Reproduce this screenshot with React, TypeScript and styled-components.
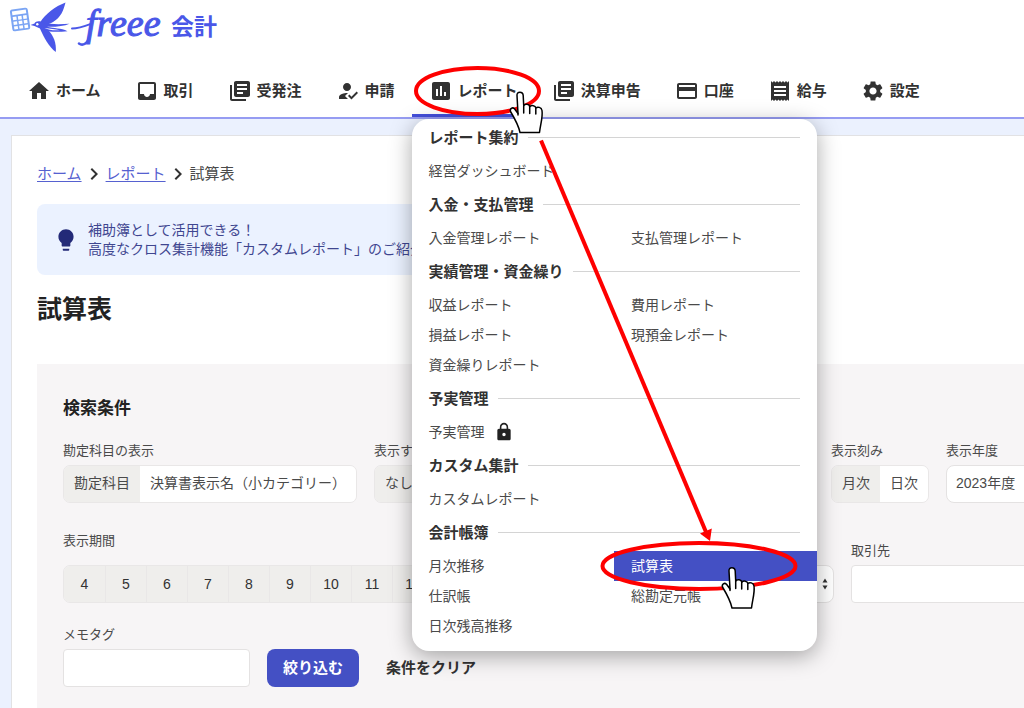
import React from "react";
import styled, { createGlobalStyle, css } from "styled-components";
import {
  MdAssessment,
  MdChevronRight,
  MdHome,
  MdHowToReg,
  MdInbox,
  MdLibraryBooks,
  MdLightbulb,
  MdLock,
  MdPayment,
  MdReceipt,
  MdSettings,
} from "react-icons/md";

const GlobalStyle = createGlobalStyle`
  *, *::before, *::after { box-sizing: border-box; }
  body {
    margin: 0;
    background: #ebf1fe;
    color: #323232;
    font-family: "Liberation Sans", "Noto Sans CJK JP", sans-serif;
    font-size: 14px;
    overflow-x: hidden;
  }
  button, input, select { font: inherit; color: inherit; }
`;

const Page = styled.div`
  display: flex;
  flex-direction: column;
  min-height: 100vh;
`;

const Header = styled.header`
  background: #fff;
  border-bottom: 2px solid #969cf2;
`;

const LogoLink = styled.a`
  display: flex;
  height: 64px;
  text-decoration: none;
`;

const LogoDrawing = styled.svg`
  width: 230px;
  height: 60px;
`;

const NavList = styled.ul`
  display: flex;
  height: 53px;
  margin: 0;
  padding: 0 10px;
  list-style: none;
`;

const NavItem = styled.li<{ $active?: boolean }>`
  position: relative;
  display: flex;
  border-bottom: 3px solid ${(p) => (p.$active ? "#444fdb" : "transparent")};
`;

const NavLink = styled.a`
  display: flex;
  align-items: center;
  gap: 5px;
  padding: 3px 17px 0;
  color: #323232;
  font-size: 15px;
  line-height: 20px;
  font-weight: 700;
  text-decoration: none;
  white-space: nowrap;

  svg { width: 24px; height: 24px; }
`;

const Menu = styled.div`
  position: absolute;
  z-index: 2;
  top: 55px;
  left: 0;
  width: 405px;
  padding-bottom: 10px;
  border-radius: 17px;
  background: #fff;
  box-shadow: 0 5px 22px rgba(0, 0, 0, 0.34);
`;

const MenuHeading = styled.h2`
  display: flex;
  align-items: center;
  gap: 9px;
  height: 37px;
  margin: 0;
  padding: 0 17px;
  font-size: 15px;
  line-height: 20px;
  white-space: nowrap;

  &::after {
    content: "";
    flex: 1;
    border-top: 1px solid #d4d4d4;
  }
`;

const MenuGrid = styled.div`
  display: grid;
  grid-template-columns: 1fr 1fr;
`;

const MenuLink = styled.a<{ $selected?: boolean }>`
  display: flex;
  align-items: center;
  gap: 9px;
  height: 30px;
  padding: 0 17px;
  font-size: 14px;
  line-height: 20px;
  color: ${(p) => (p.$selected ? "#fff" : "#4a4a4a")};
  background: ${(p) => (p.$selected ? "#4450c4" : "transparent")};
  text-decoration: none;
  white-space: nowrap;

  svg { width: 20px; height: 20px; color: #222; }
`;

const Annotation = styled.svg`
  position: absolute;
  z-index: 3;
  top: 0;
  left: -12px;
  width: 430px;
  height: 560px;
  pointer-events: none;
`;

const Main = styled.main`
  display: flex;
  flex: 1;
  flex-direction: column;
  margin: 16px 0 0 11px;
  padding: 28px 0 0 25px;
  border: 1px solid #e2e2e4;
  border-width: 1px 0 0 1px;
  background: #fff;
  overflow: hidden;
`;

const Breadcrumb = styled.nav`
  display: flex;
  align-items: center;
  height: 20px;
  font-size: 15px;
  line-height: 20px;
  color: #4a4a4a;

  svg { width: 24px; height: 24px; color: #323232; }
`;

const CrumbLink = styled.a`
  color: #5661d0;
  text-underline-offset: 2px;
`;

const Notice = styled.aside`
  display: flex;
  align-items: center;
  align-self: flex-start;
  gap: 9px;
  width: 480px;
  height: 71px;
  margin-top: 20px;
  padding: 0 16px;
  border-radius: 8px;
  background: #ebf2ff;
  color: #3f4690;
  font-size: 14px;
  line-height: 19px;
  white-space: nowrap;

  svg { width: 26px; height: 26px; color: #232a78; }
  p { margin: 0; }
`;

const Title = styled.h1`
  margin: 16px 0 37px;
  font-size: 25px;
  line-height: 36px;
  color: #222;
`;

const Filters = styled.form`
  flex: 1;
  padding: 32px 0 21px 26px;
  background: #f7f5f6;
`;

const FilterTitle = styled.h2`
  margin: 0 0 19px;
  font-size: 17px;
  line-height: 26px;
  color: #222;
`;

const FieldRow = styled.div<{ $space?: number }>`
  display: flex;
  align-items: flex-end;
  gap: 17px;
  margin-top: ${(p) => p.$space ?? 0}px;
`;

const Field = styled.div<{ $width?: number; $labelGap?: number }>`
  display: flex;
  flex: none;
  flex-direction: column;
  gap: ${(p) => p.$labelGap ?? 4}px;
  width: ${(p) => (p.$width ? `${p.$width}px` : "auto")};
`;

const labelText = css`
  font-size: 13px;
  line-height: 20px;
  color: #4a4a4a;
  white-space: nowrap;
`;

const FieldLabel = styled.label`${labelText}`;
const GroupLabel = styled.span`${labelText}`;

const Controls = styled.div<{ $gap?: number }>`
  display: flex;
  gap: ${(p) => p.$gap ?? 17}px;
`;

const Segments = styled.div`
  display: flex;
  align-self: flex-start;
  height: 38px;
  border: 1px solid #e9e7e7;
  border-radius: 7px;
  overflow: hidden;
`;

const Segment = styled.button<{ $on?: boolean }>`
  padding: 0 10px 2px;
  border: 0;
  background: ${(p) => (p.$on ? "#efeeec" : "#fff")};
  color: #4a4a4a;
  font-size: 14px;
  line-height: 20px;
  white-space: nowrap;
`;

const Month = styled(Segment)`
  width: 41px;
  padding: 0;
  color: #323232;

  & + & { border-left: 1px solid #e9e7e7; }
`;

const control = css`
  height: 38px;
  border: 1px solid #e4e2e2;
  background: #fff;
  font-size: 14px;
`;

const TextInput = styled.input<{ $width: number }>`
  ${control}
  width: ${(p) => p.$width}px;
  padding: 0 8px;
  border-radius: 4px;
`;

const Select = styled.select<{ $width: number }>`
  ${control}
  width: ${(p) => p.$width}px;
  padding: 0 9px 2px;
  border-radius: 8px;
  color: #4a4a4a;
  appearance: none;
`;

const SelectBox = styled.span`
  position: relative;
  display: flex;

  svg {
    position: absolute;
    top: 13px;
    right: 6px;
    width: 6px;
    height: 12px;
    pointer-events: none;
  }
`;

const SubmitButton = styled.button`
  height: 38px;
  padding: 0 16px 3px;
  border: 0;
  border-radius: 8px;
  background: #4450c4;
  color: #fff;
  font-size: 15px;
  font-weight: 700;
`;

const ClearButton = styled.button`
  height: 38px;
  padding: 0 9px 3px;
  border: 0;
  background: none;
  font-size: 15px;
  font-weight: 700;
`;

type NavEntry = { label: string; icon: React.ReactNode; active?: boolean };
const navEntries: NavEntry[] = [
  { label: "ホーム", icon: <MdHome /> },
  { label: "取引", icon: <MdInbox /> },
  { label: "受発注", icon: <MdLibraryBooks /> },
  { label: "申請", icon: <MdHowToReg /> },
  { label: "レポート", icon: <MdAssessment />, active: true },
  { label: "決算申告", icon: <MdLibraryBooks /> },
  { label: "口座", icon: <MdPayment /> },
  { label: "給与", icon: <MdReceipt /> },
  { label: "設定", icon: <MdSettings /> },
];

const menuSections = [
  { title: "レポート集約", items: ["経営ダッシュボード"] },
  { title: "入金・支払管理", items: ["入金管理レポート", "支払管理レポート"] },
  {
    title: "実績管理・資金繰り",
    items: ["収益レポート", "費用レポート", "損益レポート", "現預金レポート", "資金繰りレポート"],
  },
  { title: "予実管理", items: ["予実管理"], locked: true },
  { title: "カスタム集計", items: ["カスタムレポート"] },
  { title: "会計帳簿", items: ["月次推移", "試算表", "仕訳帳", "総勘定元帳", "日次残高推移"] },
];

const months = [4, 5, 6, 7, 8, 9, 10, 11, 12, 1, 2, 3];

function Logo() {
  return (
    <LogoLink href="#">
      <LogoDrawing viewBox="0 0 230 60" role="img" aria-label="freee 会計">
        <g transform="rotate(-8 20 19)">
          <rect x="11" y="8.500" width="18" height="22" rx="2.500" fill="#7ba5f4" />
          <path
            fill="#fff"
            d="M13 10.500h14v3.800H13zM13 16h3.700v3.400H13zM18.200 16h3.700v3.400H18.200zM23.400 16H27v3.400H23.400zM13 20.800h3.700v3.300H13zM18.200 20.800h3.700v3.300H18.200zM23.400 20.800H27v3.300H23.400zM13 25.500h3.700v3.200H13zM18.200 25.500h3.700v3.200H18.200zM23.400 25.500H27v3.200H23.400z"
          />
        </g>
        <g fill="#4a57e8">
          <path d="M65.500 2.500C55 6.500 45.500 14 40 22.500L45.500 25C53 23.500 58.500 18.500 61.500 13.500C63.500 10 64.500 6 65.500 2.500Z" />
          <path d="M39.500 27.500C44 38 49 47 55.800 52C56.500 43 53.500 35.500 48.500 30.500L42 27.500Z" />
          <path d="M30.500 25L34.500 23.500C35.500 21 40 20.500 42.500 22.800C50 24.500 60 24.500 69.500 23.800C64 26.300 56 27 47 26.800C54 28.500 61 28 67.500 31.200C59 32 50 32.500 44 30C40.500 28.800 37 27.500 34.500 26Z" />
        </g>
        <path d="M44.500 28C49 30.300 54 30.600 60 30.200C55 29.300 50 28.800 44.500 28Z" fill="#fff" />
        <circle cx="37.300" cy="24.200" r="1.200" fill="#fff" />
        <path d="M72 28.500C79 28.500 84 26.500 92 23.500" fill="none" stroke="#4a57e8" strokeWidth="2" strokeLinecap="round" />
        <path d="M89 38C87.500 43 83 46.500 79 43.500" fill="none" stroke="#4a57e8" strokeWidth="2.600" strokeLinecap="round" />
        <text
          x="86"
          y="36"
          fill="#4a57e8"
          stroke="#4a57e8"
          strokeWidth="1.100"
          fontFamily="Liberation Serif, serif"
          fontSize="38"
          fontStyle="italic"
        >
          freee
        </text>
        <text x="171" y="35" fill="#4a57e8" fontFamily="Noto Sans CJK JP, sans-serif" fontSize="23" fontWeight="700">
          会計
        </text>
      </LogoDrawing>
    </LogoLink>
  );
}

function Hand({ x, y }: { x: number; y: number }) {
  return (
    <g transform={`translate(${x} ${y})`} stroke="#000" strokeWidth="1.500" strokeLinejoin="round" strokeLinecap="round">
      <path
        fill="#fff"
        d="M7.500 4.500C7 0 13.500 0 13.700 4.500L14.200 14.500C15.500 12.500 20 12.800 20.200 15.800C22 13.800 26 14.300 26.300 17C28 15.500 32 16 32.500 19.500C33.500 26 31 33 30 41.500H10.500C9 34 5.500 28 1 20.500C0 17.500 3 15.800 5 17.800L8.500 22.500Z"
      />
      <path fill="none" d="M14.200 14.500V22M20.200 15.800V22.500M26.300 17V23M8.500 22.500V24" />
    </g>
  );
}

function ReportMenu() {
  return (
    <Menu>
      {menuSections.map((section) => (
        <section key={section.title}>
          <MenuHeading>{section.title}</MenuHeading>
          <MenuGrid>
            {section.items.map((item) => (
              <MenuLink key={item} href="#" $selected={item === "試算表"}>
                {item}
                {section.locked && <MdLock />}
              </MenuLink>
            ))}
          </MenuGrid>
        </section>
      ))}
    </Menu>
  );
}

function Guide() {
  return (
    <Annotation viewBox="400 64 430 560" aria-hidden="true">
      <g fill="none" stroke="#fe0000" strokeWidth="4">
        <ellipse cx="477.500" cy="91" rx="61.500" ry="23" />
        <ellipse cx="699" cy="566" rx="96.500" ry="23" />
        <path d="M541 140.500L706 532" />
      </g>
      <path d="M700 533.500L711.800 528.500L710 541Z" fill="#fe0000" />
      <Hand x={509.5} y={91} />
      <Hand x={721.5} y={566.5} />
    </Annotation>
  );
}

export default function App() {
  return (
    <Page>
      <GlobalStyle />
      <Header>
        <Logo />
        <nav>
          <NavList>
            {navEntries.map((entry) => (
              <NavItem key={entry.label} $active={entry.active}>
                <NavLink href="#">
                  {entry.icon}
                  {entry.label}
                </NavLink>
                {entry.active && (
                  <>
                    <ReportMenu />
                    <Guide />
                  </>
                )}
              </NavItem>
            ))}
          </NavList>
        </nav>
      </Header>
      <Main>
        <Breadcrumb>
          <CrumbLink href="#">ホーム</CrumbLink>
          <MdChevronRight />
          <CrumbLink href="#">レポート</CrumbLink>
          <MdChevronRight />
          <span>試算表</span>
        </Breadcrumb>
        <Notice>
          <MdLightbulb />
          <p>
            補助簿として活用できる！
            <br />
            高度なクロス集計機能「カスタムレポート」のご紹介
          </p>
        </Notice>
        <Title>試算表</Title>
        <Filters>
          <FilterTitle>検索条件</FilterTitle>
          <FieldRow>
            <Field>
              <GroupLabel id="account">勘定科目の表示</GroupLabel>
              <Segments role="group" aria-labelledby="account">
                <Segment type="button" $on>勘定科目</Segment>
                <Segment type="button">決算書表示名（小カテゴリー）</Segment>
              </Segments>
            </Field>
            <Field $width={440}>
              <GroupLabel id="tag">表示するタグ</GroupLabel>
              <Segments role="group" aria-labelledby="tag">
                <Segment type="button" $on>なし</Segment>
                <Segment type="button">取引先</Segment>
                <Segment type="button">品目</Segment>
                <Segment type="button">部門</Segment>
              </Segments>
            </Field>
            <Field>
              <GroupLabel id="unit">表示刻み</GroupLabel>
              <Segments role="group" aria-labelledby="unit">
                <Segment type="button" $on>月次</Segment>
                <Segment type="button">日次</Segment>
              </Segments>
            </Field>
            <Field>
              <FieldLabel htmlFor="year">表示年度</FieldLabel>
              <Select id="year" $width={120}>
                <option>2023年度</option>
              </Select>
            </Field>
          </FieldRow>
          <FieldRow $space={28}>
            <Field $labelGap={14}>
              <GroupLabel id="period">表示期間</GroupLabel>
              <Controls>
                <Segments role="group" aria-labelledby="period">
                  {months.map((month) => (
                    <Month key={month} type="button" $on>{month}</Month>
                  ))}
                </Segments>
                <SelectBox>
                  <Select aria-labelledby="period" $width={260} />
                  <svg viewBox="0 0 6 12" aria-hidden="true">
                    <path d="M0.500 4.500L3 0.500L5.500 4.500ZM0.500 7.500L3 11.500L5.500 7.500Z" fill="#323232" />
                  </svg>
                </SelectBox>
              </Controls>
            </Field>
            <Field>
              <FieldLabel htmlFor="partner">取引先</FieldLabel>
              <TextInput id="partner" $width={188} />
            </Field>
          </FieldRow>
          <FieldRow $space={22}>
            <Field>
              <FieldLabel htmlFor="memo">メモタグ</FieldLabel>
              <TextInput id="memo" $width={187} />
            </Field>
            <Controls $gap={18}>
              <SubmitButton type="submit">絞り込む</SubmitButton>
              <ClearButton type="reset">条件をクリア</ClearButton>
            </Controls>
          </FieldRow>
        </Filters>
      </Main>
    </Page>
  );
}
